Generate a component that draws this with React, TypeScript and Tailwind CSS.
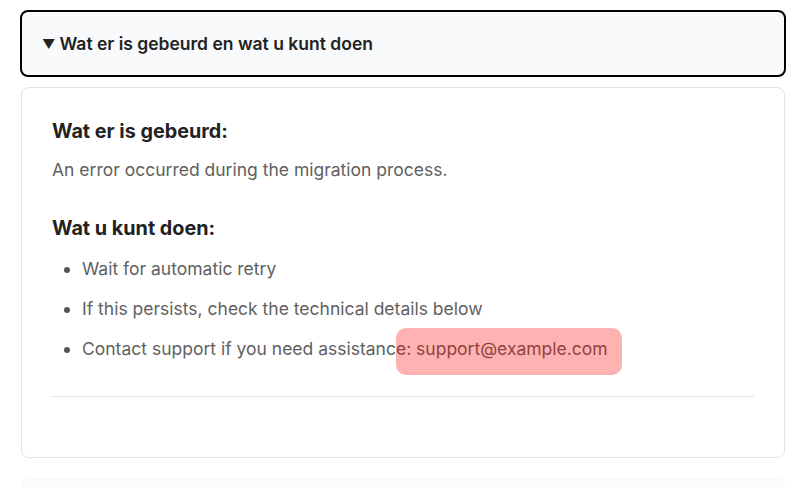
import React from "react";

export default function App() {
  return (
    <div
      className="relative min-h-[487px] w-[806px] overflow-hidden bg-white px-5 pt-[10px]"
      style={{ fontFamily: "Inter, 'Noto Sans', sans-serif" }}
    >
      <div className="flex h-[67px] items-center rounded-lg border-2 border-black bg-[#f9fafb] px-5 pt-[2px] text-[17.5px] font-semibold text-[#222]">
        <span className="mr-[4px] text-[13px]">▼</span>
        <span>Wat er is gebeurd en wat u kunt doen</span>
      </div>
      <div className="mx-px mt-[10px] rounded-lg border border-[#e2e2e2] bg-white px-[30px] pb-[60px] pt-[30px]">
        <h3 className="text-[19.8px] font-bold leading-[27px] text-[#222]">Wat er is gebeurd:</h3>
        <p className="mt-[13px] text-[17.5px] leading-6 text-[#5f5f5f]">
          An error occurred during the migration process.
        </p>
        <h3 className="mt-[33px] text-[19.8px] font-bold leading-[27px] text-[#222]">Wat u kunt doen:</h3>
        <ul className="mt-[15px] list-disc pl-[30px] text-[17.5px] leading-6 text-[#5f5f5f] marker:text-[#555]">
          <li>Wait for automatic retry</li>
          <li className="mt-4">If this persists, check the technical details below</li>
          <li className="mt-4">Contact support if you need assistance: support@example.com</li>
        </ul>
        <div className="mt-[35px] h-px bg-[#e5e5e5]" />
      </div>
      <div className="mx-px mt-[20px] h-[40px] rounded-lg bg-[#fafafa]" />
      <div className="pointer-events-none absolute left-[396px] top-[328px] h-[47px] w-[226px] rounded-[10px] bg-[rgba(255,0,0,0.3)]" />
    </div>
  );
}
